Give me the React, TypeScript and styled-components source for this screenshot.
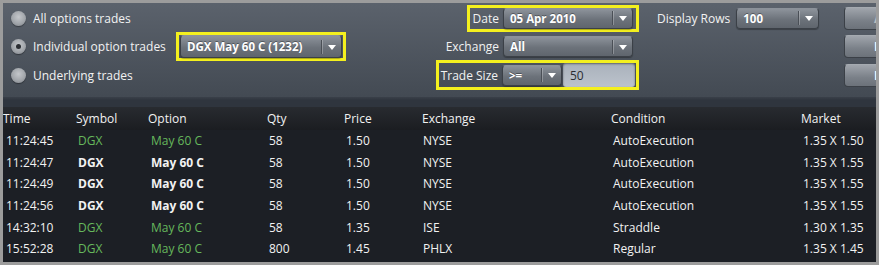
import styled, { createGlobalStyle } from "styled-components";

const GlobalStyle = createGlobalStyle`
  html, body {
    margin: 0;
    padding: 0;
    background: #9c9c9c;
  }
  body {
    font-family: "Open Sans", "DejaVu Sans", sans-serif;
    font-size: 12px;
  }
`;

const Frame = styled.div`
  width: 879px;
  height: 265px;
  box-sizing: border-box;
  border: 3px solid #9c9c9c;
  background: #1c1f25;
  overflow: hidden;
  display: flex;
  flex-direction: column;
`;

/* ---------- filter panel ---------- */

const TopPanel = styled.div`
  height: 94px;
  flex: none;
  box-sizing: border-box;
  padding-top: 1px;
  display: flex;
  background: linear-gradient(#5b626c, #434a53);
`;

const Column = styled.div<{ $width?: number; $ml?: number; $align?: string }>`
  display: flex;
  flex-direction: column;
  flex: none;
  width: ${(p) => (p.$width ? `${p.$width}px` : "auto")};
  margin-left: ${(p) => p.$ml ?? 0}px;
  align-items: ${(p) => p.$align ?? "flex-start"};
`;

const Row = styled.div<{ $gap?: number }>`
  height: 28.5px;
  display: flex;
  align-items: center;
  gap: ${(p) => p.$gap ?? 0}px;
`;

const RadioRow = styled(Row)`
  padding-left: 8px;
  gap: 7px;
  color: #f2f2f2;
`;

const Radio = styled.span<{ $checked?: boolean }>`
  width: 15px;
  height: 15px;
  border-radius: 50%;
  flex: none;
  background: radial-gradient(circle at 50% 40%, #c4c7cb 0%, #a2a6ab 55%, #7d8187 100%);
  box-shadow: 0 1px 1px rgba(0, 0, 0, 0.35);
  display: flex;
  align-items: center;
  justify-content: center;
  &::after {
    content: "";
    width: 5px;
    height: 5px;
    border-radius: 50%;
    background: #2b2e33;
    display: ${(p) => (p.$checked ? "block" : "none")};
  }
`;

const Highlight = styled.div<{ $on?: boolean; $padL?: number; $padR?: number }>`
  display: flex;
  align-items: center;
  gap: 4px;
  padding: 0 ${(p) => p.$padR ?? 3}px 0 ${(p) => p.$padL ?? 3}px;
  border: 3px solid ${(p) => (p.$on ? "#f4f01e" : "transparent")};
`;

const Label = styled.span`
  color: #f2f2f2;
  white-space: nowrap;
`;

const Joined = styled.div`
  display: flex;
  align-items: center;
  gap: 1px;
`;

const SelectBox = styled.div<{ $width: number; $height?: number }>`
  width: ${(p) => p.$width}px;
  height: ${(p) => p.$height ?? 21}px;
  box-sizing: border-box;
  display: flex;
  align-items: center;
  border-radius: 4px;
  border: 1px solid #3b4047;
  border-top-color: #8c929a;
  background: linear-gradient(#8d939b, #6c727a 55%, #5f656d);
  color: #fff;
  font-weight: 700;
  font-size: 11.5px;
  text-shadow: 0 -1px 0 rgba(0, 0, 0, 0.35);
  box-shadow: 0 1px 1px rgba(0, 0, 0, 0.3);
`;

const SelectValue = styled.span`
  flex: 1;
  padding-left: 6px;
  white-space: nowrap;
  overflow: hidden;
`;

const Divider = styled.span`
  width: 1px;
  height: 14px;
  background: #4a4f56;
  box-shadow: 1px 0 0 rgba(255, 255, 255, 0.25);
`;

const Arrow = styled.span`
  width: 19px;
  display: flex;
  justify-content: center;
  &::after {
    content: "";
    border-left: 4px solid transparent;
    border-right: 4px solid transparent;
    border-top: 5px solid #fff;
    margin-top: 1px;
  }
`;

const TextInput = styled.div`
  width: 72px;
  height: 24px;
  box-sizing: border-box;
  display: flex;
  align-items: center;
  padding-left: 7px;
  border-radius: 3px;
  background: linear-gradient(#a9b1bb, #bcc3cc);
  box-shadow: inset 0 1px 2px rgba(0, 0, 0, 0.45);
  color: #2a2d31;
`;

const SideButton = styled.div<{ $dim?: boolean }>`
  width: 80px;
  height: 23px;
  box-sizing: border-box;
  padding-left: 29px;
  display: flex;
  align-items: center;
  border-radius: 4px;
  border: 1px solid #3b4047;
  border-top-color: #a5aab0;
  background: linear-gradient(#a0a5ac, #7a8088 60%, #6c727a);
  color: ${(p) => (p.$dim ? "#b9bcc0" : "#fff")};
  font-weight: 700;
  white-space: nowrap;
`;

const Select = ({ width, height, value }: { width: number; height?: number; value: string }) => (
  <SelectBox $width={width} $height={height}>
    <SelectValue>{value}</SelectValue>
    <Divider />
    <Arrow />
  </SelectBox>
);

/* ---------- trades table ---------- */

const Band = styled.div`
  height: 10px;
  flex: none;
  background: linear-gradient(#3a4049, #2f353e 30%);
`;

const columns = "73px 72px 119px 77px 78px 189px 190px 1fr";

const HeaderRow = styled.div`
  height: 23px;
  flex: none;
  display: grid;
  grid-template-columns: ${columns};
  align-items: center;
  background: linear-gradient(#282b30, #1b1d21);
  color: #f2f2f2;
`;

const HeadCell = styled.span`
  white-space: nowrap;
`;

const DataRow = styled.div`
  height: 21.6px;
  flex: none;
  display: grid;
  grid-template-columns: ${columns};
  align-items: center;
  color: #f2f2f2;
`;

const Cell = styled.span<{ $green?: boolean; $bold?: boolean; $pad?: number }>`
  padding-left: ${(p) => p.$pad ?? 2}px;
  white-space: nowrap;
  color: ${(p) => (p.$green ? "#66b85c" : "#f2f2f2")};
  font-weight: ${(p) => (p.$bold ? 700 : 400)};
`;

type Trade = {
  time: string;
  qty: string;
  price: string;
  exchange: string;
  condition: string;
  market: string;
  green: boolean;
};

const trades: Trade[] = [
  { time: "11:24:45", qty: "58", price: "1.50", exchange: "NYSE", condition: "AutoExecution", market: "1.35 X 1.50", green: true },
  { time: "11:24:47", qty: "58", price: "1.50", exchange: "NYSE", condition: "AutoExecution", market: "1.35 X 1.55", green: false },
  { time: "11:24:49", qty: "58", price: "1.50", exchange: "NYSE", condition: "AutoExecution", market: "1.35 X 1.55", green: false },
  { time: "11:24:56", qty: "58", price: "1.50", exchange: "NYSE", condition: "AutoExecution", market: "1.35 X 1.55", green: false },
  { time: "14:32:10", qty: "58", price: "1.35", exchange: "ISE", condition: "Straddle", market: "1.30 X 1.35", green: true },
  { time: "15:52:28", qty: "800", price: "1.45", exchange: "PHLX", condition: "Regular", market: "1.35 X 1.45", green: true },
];

const headers = ["Time", "Symbol", "Option", "Qty", "Price", "Exchange", "Condition", "Market"];

export default function App() {
  return (
    <>
      <GlobalStyle />
      <Frame>
        <TopPanel>
          <Column $width={173}>
            <RadioRow>
              <Radio />
              All options trades
            </RadioRow>
            <RadioRow>
              <Radio $checked />
              Individual option trades
            </RadioRow>
            <RadioRow>
              <Radio />
              Underlying trades
            </RadioRow>
          </Column>

          <Column>
            <Row />
            <Row>
              <Highlight $on $padL={1} $padR={1}>
                <Select width={162} height={23} value="DGX May 60 C (1232)" />
              </Highlight>
            </Row>
          </Column>

          <Column $width={293} $align="flex-end">
            <Row>
              <Highlight $on>
                <Label>Date</Label>
                <Select width={130} value="05 Apr 2010" />
              </Highlight>
            </Row>
            <Row>
              <Highlight>
                <Label>Exchange</Label>
                <Select width={130} value="All" />
              </Highlight>
            </Row>
            <Row>
              <Highlight $on $padL={2} $padR={1}>
                <Label>Trade Size</Label>
                <Joined>
                  <Select width={60} value=">=" />
                  <TextInput>50</TextInput>
                </Joined>
              </Highlight>
            </Row>
          </Column>

          <Column $width={158} $ml={18}>
            <Row $gap={6}>
              <Label>Display Rows</Label>
              <Select width={83} value="100" />
            </Row>
          </Column>

          <Column $ml={29}>
            <Row>
              <SideButton $dim>Apply</SideButton>
            </Row>
            <Row>
              <SideButton>Refresh</SideButton>
            </Row>
            <Row>
              <SideButton>Export</SideButton>
            </Row>
          </Column>
        </TopPanel>

        <Band />

        <HeaderRow>
          {headers.map((h) => (
            <HeadCell key={h}>{h}</HeadCell>
          ))}
        </HeaderRow>

        {trades.map((t) => (
          <DataRow key={t.time}>
            <Cell $pad={3}>{t.time}</Cell>
            <Cell $green={t.green} $bold={!t.green}>DGX</Cell>
            <Cell $green={t.green} $bold={!t.green} $pad={3}>May 60 C</Cell>
            <Cell>{t.qty}</Cell>
            <Cell>{t.price}</Cell>
            <Cell $pad={1}>{t.exchange}</Cell>
            <Cell>{t.condition}</Cell>
            <Cell>{t.market}</Cell>
          </DataRow>
        ))}
      </Frame>
    </>
  );
}
